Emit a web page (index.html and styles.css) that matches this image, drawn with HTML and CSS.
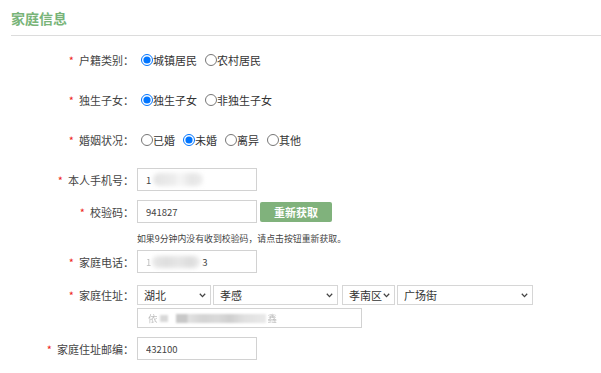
FILE: index.html
```html
<!DOCTYPE html>
<html lang="zh-CN">
<head>
  <meta charset="UTF-8" />
  <title>家庭信息</title>
  <link rel="stylesheet" href="styles.css">
</head>
<body>
  <div class="page">
    <h2 class="section-title">家庭信息</h2>

    <div class="form">
      <div class="row radio-row">
        <div class="label"><span class="req">*</span>户籍类别：</div>
        <div class="field">
          <label class="opt"><input type="radio" name="hj" checked>城镇居民</label>
          <label class="opt"><input type="radio" name="hj">农村居民</label>
        </div>
      </div>

      <div class="row radio-row">
        <div class="label"><span class="req">*</span>独生子女：</div>
        <div class="field">
          <label class="opt"><input type="radio" name="dszn" checked>独生子女</label>
          <label class="opt"><input type="radio" name="dszn">非独生子女</label>
        </div>
      </div>

      <div class="row radio-row">
        <div class="label"><span class="req">*</span>婚姻状况：</div>
        <div class="field">
          <label class="opt"><input type="radio" name="hy">已婚</label>
          <label class="opt"><input type="radio" name="hy" checked>未婚</label>
          <label class="opt"><input type="radio" name="hy">离异</label>
          <label class="opt"><input type="radio" name="hy">其他</label>
        </div>
      </div>

      <div class="row input-row first">
        <div class="label"><span class="req">*</span>本人手机号：</div>
        <div class="field">
          <div class="text-box"><span class="val">1</span><span class="smudge phone"></span></div>
        </div>
      </div>

      <div class="row input-row code">
        <div class="label"><span class="req">*</span>校验码：</div>
        <div class="field">
          <input class="text-input" type="text" value="941827">
          <button class="btn-refresh">重新获取</button>
        </div>
      </div>

      <div class="row hint-row">
        <div class="label"></div>
        <div class="field hint">如果9分钟内没有收到校验码，请点击按钮重新获取。</div>
      </div>

      <div class="row input-row home-tel">
        <div class="label"><span class="req">*</span>家庭电话：</div>
        <div class="field">
          <div class="text-box"><span class="val faint">1</span><span class="smudge tel"></span><span class="val">3</span></div>
        </div>
      </div>

      <div class="row select-row">
        <div class="label"><span class="req">*</span>家庭住址：</div>
        <div class="field selects">
          <div class="select w-prov"><span>湖北</span><svg width="7" height="5" viewBox="0 0 7 5"><path d="M0.8 0.8 L3.5 3.6 L6.2 0.8" fill="none" stroke="#444" stroke-width="1.3"/></svg></div>
          <div class="select w-city"><span>孝感</span><svg width="7" height="5" viewBox="0 0 7 5"><path d="M0.8 0.8 L3.5 3.6 L6.2 0.8" fill="none" stroke="#444" stroke-width="1.3"/></svg></div>
          <div class="select w-dist"><span>孝南区</span><svg width="7" height="5" viewBox="0 0 7 5"><path d="M0.8 0.8 L3.5 3.6 L6.2 0.8" fill="none" stroke="#444" stroke-width="1.3"/></svg></div>
          <div class="select w-street"><span>广场街</span><svg width="7" height="5" viewBox="0 0 7 5"><path d="M0.8 0.8 L3.5 3.6 L6.2 0.8" fill="none" stroke="#444" stroke-width="1.3"/></svg></div>
        </div>
      </div>

      <div class="row addr-row">
        <div class="label"></div>
        <div class="field">
          <div class="text-box addr"><span class="val faint blurred">依</span><span class="smudge small"></span><span class="smudge mosaic"></span><span class="val faint blurred">鑫</span></div>
        </div>
      </div>

      <div class="row input-row zip">
        <div class="label"><span class="req">*</span>家庭住址邮编：</div>
        <div class="field">
          <input class="text-input" type="text" value="432100">
        </div>
      </div>
    </div>
  </div>
</body>
</html>
```

FILE: styles.css
```css
* {
  box-sizing: border-box;
}

body {
  margin: 0;
  background: #fff;
  color: #333;
  font-family: "Noto Sans CJK SC", "Noto Sans", sans-serif;
  font-size: 11px;
}

.section-title {
  margin: 0 0 0 11px;
  padding: 8px 0 7px;
  font-size: 14px;
  line-height: 20px;
  font-weight: bold;
  color: #78b478;
  border-bottom: 1px solid #dcdcdc;
}

.row {
  display: flex;
  align-items: center;
}

.label {
  width: 134px;
  flex-shrink: 0;
  text-align: right;
  color: #444;
  white-space: nowrap;
}

.req {
  color: #e22;
  margin-right: 5px;
}

.field {
  display: flex;
  align-items: center;
  margin-left: 3px;
}

/* radio rows */
.radio-row {
  height: 40px;
}

.radio-row:first-of-type {
  margin-top: 4px;
}

.opt {
  display: flex;
  align-items: center;
  margin-right: 4px;
  color: #333;
}

.opt input {
  width: 12px;
  height: 12px;
  margin: 0 0 0 4px;
}

/* text inputs */
.input-row.first { margin-top: 8px; }
.input-row.code { margin-top: 9px; }
.input-row.home-tel { margin-top: 5px; }
.input-row.zip { margin-top: 9px; }

.text-input,
.text-box {
  width: 120px;
  height: 23px;
  border: 1px solid #d2d2d2;
  background: #fff;
  padding: 0 8px;
  font-family: inherit;
  font-size: 9.5px;
  color: #444;
  outline: none;
}

.text-box {
  display: flex;
  align-items: center;
}

.val.faint {
  opacity: 0.35;
}

.val.blurred {
  filter: blur(0.6px);
}

.smudge {
  display: inline-block;
  background: #e6e6e6;
  filter: blur(2px);
}

.smudge.phone {
  width: 50px;
  height: 13px;
  margin-left: 2px;
  border-radius: 7px;
  background: linear-gradient(90deg, #e3e3e3 0, #ececec 40%, #f6f6f6 55%, #e6e6e6 75%, #ececec 100%);
}

.smudge.tel {
  width: 48px;
  height: 12px;
  margin: 0 2px 0 1px;
  border-radius: 6px;
  background: linear-gradient(90deg, #e8e8e8 0, #dedede 30%, #e6e6e6 55%, #dcdcdc 80%, #eaeaea 100%);
}

.btn-refresh {
  margin-left: 3px;
  width: 72px;
  height: 20px;
  border: none;
  border-radius: 2px;
  background: #80b27c;
  color: #fff;
  font-family: inherit;
  font-size: 11px;
  font-weight: bold;
  cursor: pointer;
}

/* hint */
.hint-row {
  margin-top: 8px;
  height: 14px;
}

.hint {
  font-size: 8.9px;
  color: #444;
  margin-left: 3px;
  white-space: nowrap;
}

/* address */
.select-row {
  margin-top: 12px;
}

.selects {
  gap: 2px;
}

.select {
  height: 20px;
  border: 1px solid #d6d6d6;
  background: #fff;
  display: flex;
  align-items: center;
  justify-content: space-between;
  padding: 0 4px 0 6px;
  font-size: 11px;
  color: #333;
}

.select svg {
  flex-shrink: 0;
}

.w-prov { width: 74px; }
.w-city { width: 125px; }
.w-dist { width: 53px; margin-left: 2px; }
.w-street { width: 136px; }

.addr-row {
  margin-top: 3px;
}

.text-box.addr {
  width: 225px;
  height: 20px;
  padding-left: 10px;
}

.smudge.small {
  width: 8px;
  height: 7px;
  margin-left: 2px;
  background: #d8d8d8;
  filter: blur(1px);
}

.smudge.mosaic {
  width: 90px;
  height: 9px;
  margin: 0 2px 0 8px;
  filter: blur(1px);
  background: linear-gradient(90deg, #c8c8c8 0, #c8c8c8 12%, #e2e2e2 14%, #d4d4d4 30%, #dadada 46%, #cfcfcf 60%, #e0e0e0 75%, #e9e9e9 100%);
}
```
